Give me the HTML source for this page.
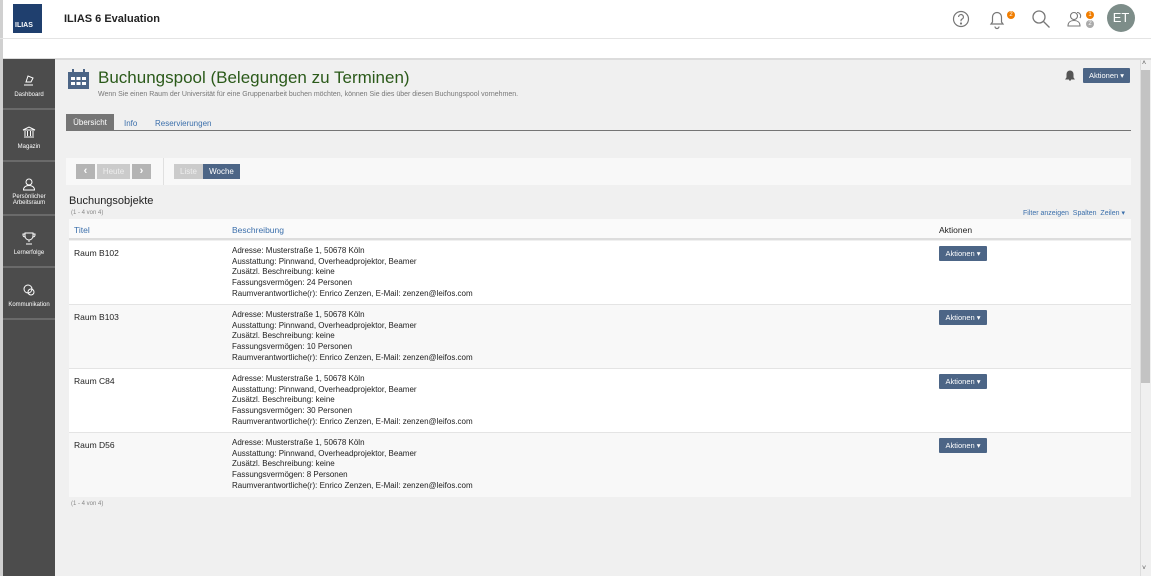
<!DOCTYPE html>
<html><head><meta charset="utf-8">
<style>
*{margin:0;padding:0;box-sizing:border-box}
body{width:1151px;height:576px;overflow:hidden;background:#fff;font-family:"Liberation Sans",sans-serif;position:relative;color:#161616}
.a{position:absolute}
.side{left:3px;top:59px;width:52px;height:517px;background:#4c4c4c}
.si{position:absolute;left:0;width:52px;height:51px;border-bottom:2px solid #6a6a6a;color:#fff;font-size:6px;text-align:center}
.si svg{display:block;margin:14px auto 5px}
.btn{background:#4c6586;color:#fff;font-size:7.5px;border-radius:1px;text-align:center;line-height:15px}
.row{left:69px;width:1062px;height:64px;font-size:8px;color:#222}
.row .t{position:absolute;left:5px;top:7px;font-size:8.5px}
.row .d{position:absolute;left:163px;top:5px;line-height:10.7px}
.row .b{position:absolute;left:870px;top:5px;width:48px;height:15px}
</style></head><body>
<div class="a" style="left:0;top:0;width:3px;height:576px;background:#d0d0d0"></div>
<div class="a" style="left:13px;top:4px;width:29px;height:29px;background:#1f3f6e"></div>
<div class="a" style="left:15px;top:22px;color:#fff;font-size:7px;font-weight:bold">ILIAS</div>
<div class="a" style="left:64px;top:13px;font-size:11px;font-weight:bold;color:#222">ILIAS 6 Evaluation</div>
<div class="a" style="left:0;top:38px;width:1151px;height:1px;background:#e4e4e4"></div>
<svg class="a" style="left:950px;top:8px" width="22" height="22" viewBox="0 0 22 22" fill="none" stroke="#777" stroke-width="1.2"><circle cx="11" cy="11" r="7.5"/><path d="M8.6 9a2.4 2.4 0 1 1 3.2 2.2c-.6.3-.8.7-.8 1.4v.6"/><circle cx="11" cy="15.5" r=".5" fill="#777"/></svg>
<svg class="a" style="left:987px;top:8px" width="20" height="22" viewBox="0 0 20 22" fill="none" stroke="#777" stroke-width="1.2"><path d="M4 16h12l-1.5-2V9a4.5 4.5 0 0 0-9 0v5z M8 18.5a2 2 0 0 0 4 0"/></svg>
<div class="a" style="left:1007px;top:11px;width:8px;height:8px;border-radius:4px;background:#f07d00;color:#fff;font-size:6px;text-align:center;line-height:8px">2</div>
<svg class="a" style="left:1030px;top:8px" width="22" height="22" viewBox="0 0 22 22" fill="none" stroke="#777" stroke-width="1.3"><circle cx="9" cy="9" r="6"/><path d="M13.5 13.5l6 6"/></svg>
<svg class="a" style="left:1066px;top:9px" width="20" height="20" viewBox="0 0 20 20" fill="none" stroke="#777" stroke-width="1.1"><circle cx="8" cy="7" r="3.5"/><path d="M2 17c0-4 3-5.5 6-5.5s6 1.5 6 5.5z"/><path d="M11 3.5a3.5 3.5 0 0 1 3 5.5"/></svg>
<div class="a" style="left:1086px;top:11px;width:8px;height:8px;border-radius:4px;background:#f07d00;color:#fff;font-size:6px;text-align:center;line-height:8px">1</div>
<div class="a" style="left:1086px;top:20px;width:8px;height:8px;border-radius:4px;background:#aaa;color:#fff;font-size:6px;text-align:center;line-height:8px">2</div>
<div class="a" style="left:1107px;top:4px;width:28px;height:28px;border-radius:14px;background:#7d8d89;color:#fff;font-size:13px;text-align:center;line-height:28px">ET</div>
<div class="a" style="left:3px;top:58px;width:1148px;height:2px;background:#dcdcdc"></div>
<div class="a" style="left:55px;top:60px;width:1085px;height:516px;background:#f0f0f0"></div>
<div class="a" style="left:1140px;top:60px;width:11px;height:516px;background:#f0f0f0;border-left:1px solid #ddd"></div>
<div class="a" style="left:1141px;top:70px;width:9px;height:313px;background:#c3c3c3"></div>
<div class="a" style="left:1142px;top:60px;font-size:7px;color:#555">˄</div>
<div class="a" style="left:1142px;top:565px;font-size:7px;color:#555">˅</div>
<div class="a side"></div>
<div class="si" style="top:59px;left:3px">
<svg width="14" height="14" viewBox="0 0 14 14" fill="none" stroke="#fff" stroke-width="1"><path d="M2 12h9M4 9l2-6 5 2-2 4z"/></svg>Dashboard</div>
<div class="si" style="top:111px;left:3px">
<svg width="14" height="14" viewBox="0 0 14 14" fill="none" stroke="#fff" stroke-width="1"><path d="M1 5l6-3 6 3zM2 12h10M3 6v5M5.5 6v5M8.5 6v5M11 6v5"/></svg>Magazin</div>
<div class="si" style="top:163px;left:3px;height:53px">
<svg width="14" height="14" viewBox="0 0 14 14" fill="none" stroke="#fff" stroke-width="1" style="margin-bottom:3px"><circle cx="7" cy="5" r="3"/><path d="M1.5 13c0-3 2.5-4.5 5.5-4.5s5.5 1.5 5.5 4.5z"/></svg>Persönlicher<br>Arbeitsraum</div>
<div class="si" style="top:217px;left:3px">
<svg width="14" height="14" viewBox="0 0 14 14" fill="none" stroke="#fff" stroke-width="1"><path d="M3 2h8v3a4 4 0 0 1-8 0zM3 3H1v1a2 2 0 0 0 2 2M11 3h2v1a2 2 0 0 1-2 2M7 9v2M4 13h6"/></svg>Lernerfolge</div>
<div class="si" style="top:269px;left:3px">
<svg width="14" height="14" viewBox="0 0 14 14" fill="none" stroke="#fff" stroke-width="1"><circle cx="6" cy="6" r="4"/><circle cx="9" cy="9" r="3"/></svg>Kommunikation</div>
<svg class="a" style="left:68px;top:69px" width="21" height="20" viewBox="0 0 21 20"><rect x="0" y="3" width="21" height="17" fill="#4c6586"/><rect x="4" y="0" width="2" height="5" fill="#4c6586"/><rect x="15" y="0" width="2" height="5" fill="#4c6586"/><g fill="#fff"><rect x="3" y="8" width="4" height="3"/><rect x="8.5" y="8" width="4" height="3"/><rect x="14" y="8" width="4" height="3"/><rect x="3" y="13" width="4" height="3"/><rect x="8.5" y="13" width="4" height="3"/><rect x="14" y="13" width="4" height="3"/></g></svg>
<div class="a" style="left:98px;top:68px;font-size:17px;color:#2b5a1a">Buchungspool (Belegungen zu Terminen)</div>
<div class="a" style="left:98px;top:91px;font-size:7px;color:#777">Wenn Sie einen Raum der Universität für eine Gruppenarbeit buchen möchten, können Sie dies über diesen Buchungspool vornehmen.</div>
<svg class="a" style="left:1065px;top:70px" width="10" height="11" viewBox="0 0 10 11"><path d="M1 9h8L8 7.5V4a3 3 0 0 0-6 0v3.5z M4 10h2" fill="#555" stroke="#555"/></svg>
<div class="a btn" style="left:1083px;top:68px;width:47px;height:15px">Aktionen ▾</div>
<div class="a" style="left:66px;top:114px;width:48px;height:16px;background:#757575;color:#fff;font-size:8px;text-align:center;line-height:17px">Übersicht</div>
<div class="a" style="left:124px;top:119px;font-size:8px;color:#3b6fab">Info</div>
<div class="a" style="left:155px;top:119px;font-size:8px;color:#3b6fab">Reservierungen</div>
<div class="a" style="left:66px;top:130px;width:1065px;height:1px;background:#757575"></div>
<div class="a" style="left:66px;top:158px;width:1065px;height:27px;background:#f8f8f8"></div>
<div class="a" style="left:163px;top:158px;width:1px;height:27px;background:#e0e0e0"></div>
<div class="a" style="left:76px;top:164px;width:19px;height:15px;background:#b4b4b4;color:#fff;font-size:11px;text-align:center;line-height:14px;font-weight:bold">‹</div>
<div class="a" style="left:97px;top:164px;width:33px;height:15px;background:#cbcbcb;color:#eee;font-size:8px;text-align:center;line-height:15px">Heute</div>
<div class="a" style="left:132px;top:164px;width:19px;height:15px;background:#b4b4b4;color:#fff;font-size:11px;text-align:center;line-height:14px;font-weight:bold">›</div>
<div class="a" style="left:174px;top:164px;width:29px;height:15px;background:#cbcbcb;color:#eee;font-size:8px;text-align:center;line-height:15px">Liste</div>
<div class="a" style="left:203px;top:164px;width:37px;height:15px;background:#4c6586;color:#fff;font-size:8px;text-align:center;line-height:15px">Woche</div>
<div class="a" style="left:69px;top:195px;font-size:11px;color:#222">Buchungsobjekte</div>
<div class="a" style="left:71px;top:210px;font-size:6px;color:#888">(1 - 4 von 4)</div>
<div class="a" style="left:1023px;top:209px;font-size:7px;color:#3b6fab">Filter anzeigen&nbsp; Spalten&nbsp; Zeilen ▾</div>
<div class="a" style="left:69px;top:219px;width:1062px;height:21px;background:#fafafa;border-bottom:2px solid #ddd"></div>
<div class="a" style="left:74px;top:225px;font-size:8.5px;color:#3b6fab">Titel</div>
<div class="a" style="left:232px;top:225px;font-size:8.5px;color:#3b6fab">Beschreibung</div>
<div class="a" style="left:939px;top:225px;font-size:8.5px;color:#222">Aktionen</div>
<div class="a row" style="top:241px;background:#fff;border-bottom:1px solid #e4e4e4"><div class="t">Raum B102</div><div class="d">Adresse: Musterstraße 1, 50678 Köln<br>Ausstattung: Pinnwand, Overheadprojektor, Beamer<br>Zusätzl. Beschreibung: keine<br>Fassungsvermögen: 24 Personen<br>Raumverantwortliche(r): Enrico Zenzen, E-Mail: zenzen@leifos.com</div><div class="b btn">Aktionen ▾</div></div>
<div class="a row" style="top:305px;background:#f8f8f8;border-bottom:1px solid #e4e4e4"><div class="t">Raum B103</div><div class="d">Adresse: Musterstraße 1, 50678 Köln<br>Ausstattung: Pinnwand, Overheadprojektor, Beamer<br>Zusätzl. Beschreibung: keine<br>Fassungsvermögen: 10 Personen<br>Raumverantwortliche(r): Enrico Zenzen, E-Mail: zenzen@leifos.com</div><div class="b btn">Aktionen ▾</div></div>
<div class="a row" style="top:369px;background:#fff;border-bottom:1px solid #e4e4e4"><div class="t">Raum C84</div><div class="d">Adresse: Musterstraße 1, 50678 Köln<br>Ausstattung: Pinnwand, Overheadprojektor, Beamer<br>Zusätzl. Beschreibung: keine<br>Fassungsvermögen: 30 Personen<br>Raumverantwortliche(r): Enrico Zenzen, E-Mail: zenzen@leifos.com</div><div class="b btn">Aktionen ▾</div></div>
<div class="a row" style="top:433px;background:#f8f8f8"><div class="t">Raum D56</div><div class="d">Adresse: Musterstraße 1, 50678 Köln<br>Ausstattung: Pinnwand, Overheadprojektor, Beamer<br>Zusätzl. Beschreibung: keine<br>Fassungsvermögen: 8 Personen<br>Raumverantwortliche(r): Enrico Zenzen, E-Mail: zenzen@leifos.com</div><div class="b btn">Aktionen ▾</div></div>
<div class="a" style="left:71px;top:501px;font-size:6px;color:#888">(1 - 4 von 4)</div>
</body></html>
